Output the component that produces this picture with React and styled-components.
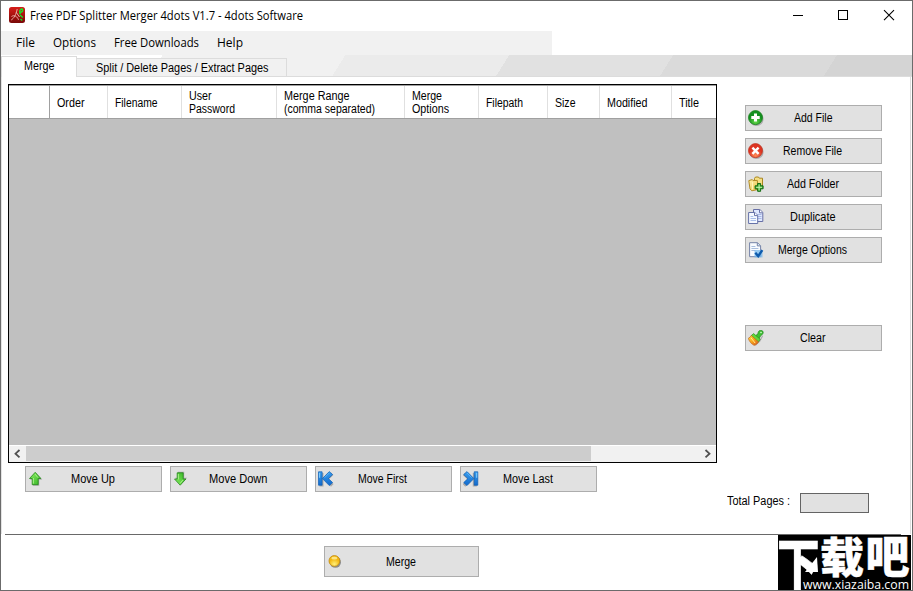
import React, { useLayoutEffect, useRef, useState } from 'react';
import styled, { createGlobalStyle } from 'styled-components';

const GlobalStyle = createGlobalStyle`
  * {
    box-sizing: border-box;
  }

  body {
    margin: 0;
    overflow: hidden;
    background: #fff;
  }
`;

const Window = styled.div`
  position: relative;
  width: 913px;
  height: 591px;
  display: flex;
  flex-direction: column;
  background: #fff;
  color: #000;
  border: 1px solid #6b6b6b;
  font-family: 'Liberation Sans', Arial, sans-serif;
  font-size: 12px;
  overflow: hidden;
`;

const TitleBar = styled.header`
  height: 30px;
  display: flex;
  align-items: center;
  padding: 0 0 2px 8px;
  font-family: 'Open Sans', 'Noto Sans', sans-serif;
  font-size: 12px;

  > svg:first-child {
    margin-right: 5px;
  }
`;

const Controls = styled.div`
  margin-left: auto;
  display: flex;
  width: 137px;
  height: 28px;
`;

const MenuBar = styled.nav`
  width: 551px;
  height: 24px;
  display: flex;
  align-items: center;
  gap: 18px;
  padding: 0 0 2px 15px;
  background: #f1f1f1;
  font-family: 'Open Sans', 'Noto Sans', sans-serif;
  font-size: 12px;
`;

const TabStrip = styled.div`
  height: 22px;
  display: flex;
  align-items: flex-end;
  border-bottom: 1px solid #dcdcdc;
  background: linear-gradient(
    122deg,
    #fff 0 137px,
    #f1f1f1 137px 292px,
    #ebebeb 292px 431px,
    #e1e1e1 431px 570px,
    #dadada 570px 709px,
    #d4d4d4 709px
  );
`;

const Tab = styled.div`
  height: ${props => (props.$active ? '21px' : '18px')};
  width: ${props => (props.$active ? '76px' : '210px')};
  margin-bottom: ${props => (props.$active ? '-1px' : '0')};
  padding: ${props => (props.$active ? '3px 0 0 22px' : '3px 0 0 19px')};
  background: ${props => (props.$active ? '#fff' : '#f1f1f1')};
  border: 1px solid #dcdcdc;
  border-left-width: ${props => (props.$active ? '1px' : '0')};
  border-bottom: 0;
`;

const Page = styled.main`
  height: 457px;
  display: flex;
  padding: 7px 0 0 6px;
  border-left: 1px solid #e3e3e3;
  border-right: 1px solid #dcdcdc;
  margin-right: 1px;
`;

const FilesPane = styled.section`
  width: 709px;
`;

const Grid = styled.div`
  height: 379px;
  display: flex;
  flex-direction: column;
  border: 1px solid #000;
  background: #c0c0c0;
`;

const HeaderRow = styled.div`
  height: 34px;
  display: flex;
  background: #fff;
  border-top: 1px solid #a0a0a0;
  border-bottom: 1px solid #a0a0a0;
`;

const HeaderCell = styled.div`
  width: ${props => props.$width}px;
  flex: none;
  display: flex;
  flex-direction: column;
  justify-content: center;
  padding: ${props => (props.$wrapped ? '1px' : '3px')} 0 0 6.6px;
  border-right: 1px solid ${props => (props.$corner ? '#a0a0a0' : props.$last ? '#fff' : '#e0e0e0')};
`;

const Rows = styled.div`
  flex: 1;
`;

const ScrollBar = styled.div`
  height: 17px;
  display: flex;
  background: #f1f1f1;
  border-top: 1px solid #fff;
`;

const ScrollButton = styled.div`
  width: 17px;
  height: 16px;
`;

const Thumb = styled.div`
  width: 565px;
  height: 15px;
  margin-right: auto;
  background: #cdcdcd;
`;

const MoveRow = styled.div`
  display: flex;
  gap: 8px;
  padding: 3px 0 0 17px;
`;

const SidePane = styled.aside`
  flex: 1;
  display: flex;
  flex-direction: column;
  padding: 21px 0 0 28px;
`;

const SideButtons = styled.div`
  display: flex;
  flex-direction: column;
  gap: 7px;
`;

const ClearSlot = styled.div`
  margin-top: 62px;
`;

const Button = styled.button`
  width: ${props => (props.$large ? '155px' : '137px')};
  height: ${props => (props.$large ? '31px' : '26px')};
  display: flex;
  align-items: center;
  padding: 0 19.4px 0 2px;
  background: #e1e1e1;
  border: 1px solid #adadad;
  color: #000;
  font: inherit;

  > svg {
    flex: none;
  }
`;

const ButtonLabel = styled.span`
  flex: 1;
  display: flex;
  justify-content: center;
  padding-top: ${props => (props.$large ? '2px' : '0')};
`;

const Total = styled.div`
  display: flex;
  align-items: flex-start;
  gap: 10px;
  margin: 142px 0 0 -18px;
`;

const TotalLabel = styled.div`
  padding-top: 2px;
`;

const TotalBox = styled.div`
  width: 69px;
  height: 20px;
  background: #e1e1e1;
  border: 1px solid #646464;
`;

const Footer = styled.footer`
  width: 896px;
  margin-left: 4px;
  padding: 11px 0 0 319px;
  border-top: 1px solid #696969;
`;

const Watermark = styled.svg`
  position: absolute;
  right: 1px;
  bottom: -1px;
`;

const FitBox = styled.span`
  display: block;
  width: ${props => props.$width}px;
  height: 13px;
  line-height: 13px;
  white-space: pre;
`;

const FitInner = styled.span`
  display: inline-block;
  transform-origin: 0 50%;
`;

// Squeezes a label to the width the original bitmap font gives it
const Fit = ({ width, children }) => {
  const ref = useRef(null);
  const [scale, setScale] = useState(1);

  useLayoutEffect(() => {
    const el = ref.current;
    el.style.transform = 'none';
    const natural = el.getBoundingClientRect().width;
    el.style.transform = `scaleX(${width / natural})`;
    setScale(width / natural);
  }, [width, children]);

  return (
    <FitBox $width={width}>
      <FitInner ref={ref} style={{ transform: `scaleX(${scale})` }}>
        {children}
      </FitInner>
    </FitBox>
  );
};

const columns = [
  { width: 58, lines: [['Order', 27.5]] },
  { width: 74, lines: [['Filename', 42.5]] },
  { width: 95, lines: [['User', 22.5], ['Password', 46]] },
  { width: 128, lines: [['Merge Range', 65.5], ['(comma separated)', 91]] },
  { width: 74, lines: [['Merge', 30], ['Options', 37]] },
  { width: 69, lines: [['Filepath', 37]] },
  { width: 52, lines: [['Size', 20.5]] },
  { width: 72, lines: [['Modified', 40.5]] },
  { width: 44, lines: [['Title', 20]], last: true },
];

const Icon = ({ children }) => (
  <svg width="16" height="16" viewBox="0 0 16 16">
    {children}
  </svg>
);

const AddIcon = () => (
  <Icon>
    <circle cx="8.4" cy="8.8" r="7.2" fill="#777" opacity="0.5" />
    <circle cx="7.5" cy="7.6" r="7" fill="url(#green)" stroke="#17801a" strokeWidth="0.8" />
    <path d="M6 3.5h3V6h2.7v3H9v2.6H6V9H3.3V6H6z" fill="#fff" />
  </Icon>
);

const RemoveIcon = () => (
  <Icon>
    <circle cx="8.4" cy="8.8" r="7.2" fill="#777" opacity="0.5" />
    <circle cx="7.5" cy="7.6" r="7" fill="url(#red)" stroke="#c2331f" strokeWidth="0.8" />
    <path d="M4.4 4.6l6.2 6.2M10.6 4.6l-6.2 6.2" stroke="#fff" strokeWidth="2.4" />
  </Icon>
);

const FolderIcon = () => (
  <Icon>
    <path d="M6.5 2.5l1-1.5h3l.8 1.2h3.2v10H6z" fill="#f6df83" stroke="#a88620" />
    <path d="M.8 4.6l3.5-1 .7 1 4.3-.2 1 9-6.5 1.4L2 13z" fill="url(#folder)" stroke="#b28c26" />
    <path d="M4.5 6v7.5" stroke="#fff3b8" />
    <path d="M9.6 7.5h3v2.3h2.5v3h-2.5v2.5h-3v-2.5H7.1v-3h2.5z" fill="#39a92b" stroke="#156c14" />
    <path d="M11.1 8.5v6M8.1 11.3h6" stroke="#caf5b6" />
  </Icon>
);

const DuplicateIcon = () => (
  <Icon>
    <path d="M5.5.5h6.3l3 2.8v9.2H5.5z" fill="#dfe8ff" stroke="#6870a6" />
    <path d="M11.5.8v3h3" fill="#fff" stroke="#6870a6" />
    <path d="M8 5.5h5.5M8 7.5h5.5M8 9.5h5.5" stroke="#a8b8e4" />
    <path d="M.6 3.5h6.2l2.9 2.8v8.2H.6z" fill="#f4f8ff" stroke="#6672a8" />
    <path d="M6.5 3.6v3h3" fill="#fff" stroke="#6672a8" />
    <path d="M2.5 7.5h2.8M2.5 9.5h5.5M2.5 11.5h5.5" stroke="#a9bee9" />
  </Icon>
);

const OptionsIcon = () => (
  <Icon>
    <path d="M1.6.7h8l3 3v11h-11z" fill="#f8fbff" stroke="#7483a7" />
    <path d="M9.3.8v3.1h3.2" fill="#dce9fa" stroke="#7483a7" />
    <path d="M3.4 4.5h4M3.4 6.5h7M3.4 8.5h4" stroke="#a8bddd" />
    <path d="M6.5 8h8v7.4h-8z" fill="#74b8ed" opacity="0.75" />
    <path d="M7.3 10.8l2.9 3.3 4.1-6" fill="none" stroke="#0e5bad" strokeWidth="2.4" />
  </Icon>
);

const ClearIcon = () => (
  <Icon>
    <path d="M5.6 15.2l5.2-4 3.6-6 .6 1-2.6 5-4.4 4.2z" fill="#777" opacity="0.5" />
    <path d="M7.6 5.8l2.4-2.2c0-1.8.9-3.1 2.7-3.3 1.7 0 2.8 1.2 2.4 2.8-.4 1.5-1.6 2-2.6 2.8L10.8 9z" fill="#3fc035" stroke="#23851f" strokeWidth="0.7" />
    <circle cx="13" cy="2.5" r="0.8" fill="#d9ffd0" />
    <path d="M5.6 3.6l6.6 5.6-1.8 2.8-7.4-6.2z" fill="#62d83a" stroke="#2b901f" strokeWidth="0.7" />
    <path d="M3.2 5.4l7.2 6.4c-.8 1.8-2.2 3-4.3 3.5C3.4 14.1 1.3 11.3.3 8.3c1.4-.6 2.3-1.5 2.9-2.9z" fill="url(#brush)" stroke="#c2661a" strokeWidth="0.7" />
    <path d="M3 7.9l4.2 5.2" stroke="#fff08a" />
  </Icon>
);

const ArrowIcon = ({ down }) => (
  <Icon>
    <g transform={down ? 'translate(0 15.5) scale(1 -1)' : undefined}>
      <path d="M8 2.2l6.2 6.5h-3v6H5V8.7H2z" fill="#777" opacity="0.5" />
      <path d="M7.2 1.3l5.7 6.2h-2.7v6.2h-6V7.5H1.5z" fill="url(#arrow)" stroke="#24861c" strokeWidth="0.8" />
      <path d="M7.2 3.2l2.7 3.4M5.4 7v5.6" stroke="#b8f797" strokeWidth="0.8" />
    </g>
  </Icon>
);

const EndIcon = ({ last }) => (
  <Icon>
    <g transform={last ? 'translate(15.3 0) scale(-1 1)' : undefined}>
      <path d="M1.5 2h4v13.5h-4zM13 1.5l2.4 2.6-4.6 4.4 4.8 4.6-2.6 2.6-7-7z" fill="#666" opacity="0.45" />
      <path d="M.5.8h3.6v13.4H.5zM11.3.6l3.3 3-4.2 4 4.2 4-3.3 3-6.9-7z" fill="url(#blue)" stroke="#0f5fb6" strokeWidth="0.7" />
      <path d="M1.6 1.8v5" stroke="#82d0ff" />
      <path d="M11.3 1.9L6.6 6.7" stroke="#6cc3fa" strokeWidth="0.7" />
    </g>
  </Icon>
);

const MergeIcon = () => (
  <Icon>
    <circle cx="8.4" cy="8.2" r="5.6" fill="#555" opacity="0.6" />
    <circle cx="7.4" cy="6.9" r="5.4" fill="url(#gold)" stroke="#c08a14" strokeWidth="0.8" />
    <ellipse cx="7.3" cy="4.2" rx="3" ry="1.4" fill="#fff6b5" opacity="0.7" />
  </Icon>
);

const AppIcon = () => (
  <svg width="16" height="16" viewBox="0 0 16 16">
    <rect width="16" height="16" rx="2.5" fill="url(#app)" />
    <path d="M2.2 13c2.5-1.5 5-5.2 6-11M2.5 9.5c3-2 6 .3 7 3.3M7 5l3.5 5" fill="none" stroke="#e9aaa4" strokeWidth="1" />
    <path d="M13.5 1.8c-2 .5-3.2 1.7-2.7 3.4 2.4.1 3.3-.9 2.7-3.4M10.3 7l1.5-1.3M11 8l2.8 2.5M11.5 12l1.7 1.5" fill="none" stroke="#18e52b" strokeWidth="1.4" />
  </svg>
);

const DefsSvg = styled.svg`
  position: absolute;
`;

const Defs = () => (
  <DefsSvg width="0" height="0">
    <defs>
      <radialGradient id="green" cx="0.5" cy="0.8">
        <stop stopColor="#65d849" />
        <stop offset="1" stopColor="#139020" />
      </radialGradient>
      <radialGradient id="red" cx="0.5" cy="0.85">
        <stop stopColor="#ff8a55" />
        <stop offset="1" stopColor="#dd3322" />
      </radialGradient>
      <radialGradient id="gold" cx="0.5" cy="0.8">
        <stop stopColor="#fff07a" />
        <stop offset="1" stopColor="#f3b710" />
      </radialGradient>
      <linearGradient id="folder" x2="1" y2="1">
        <stop stopColor="#fff2ab" />
        <stop offset="1" stopColor="#e9c24a" />
      </linearGradient>
      <linearGradient id="brush" x2="1" y2="1">
        <stop stopColor="#ffe144" />
        <stop offset="0.5" stopColor="#f7a51c" />
        <stop offset="1" stopColor="#d9531b" />
      </linearGradient>
      <linearGradient id="arrow" x2="1" y2="1">
        <stop stopColor="#8cef63" />
        <stop offset="1" stopColor="#33b324" />
      </linearGradient>
      <linearGradient id="blue" x2="0" y2="1">
        <stop stopColor="#3a9eee" />
        <stop offset="1" stopColor="#1169cc" />
      </linearGradient>
      <linearGradient id="app" x2="0" y2="1">
        <stop stopColor="#d61c18" />
        <stop offset="1" stopColor="#790908" />
      </linearGradient>
    </defs>
  </DefsSvg>
);

const sideButtons = [
  { label: 'Add File', width: 38.5, icon: <AddIcon /> },
  { label: 'Remove File', width: 59, icon: <RemoveIcon /> },
  { label: 'Add Folder', width: 52, icon: <FolderIcon /> },
  { label: 'Duplicate', width: 45.5, icon: <DuplicateIcon /> },
  { label: 'Merge Options', width: 69, icon: <OptionsIcon /> },
];

const moveButtons = [
  { label: 'Move Up', width: 44, icon: <ArrowIcon /> },
  { label: 'Move Down', width: 58.5, icon: <ArrowIcon down /> },
  { label: 'Move First', width: 49, icon: <EndIcon /> },
  { label: 'Move Last', width: 50, icon: <EndIcon last /> },
];

const ActionButton = ({ icon, label, width, large }) => (
  <Button $large={large}>
    {icon}
    <ButtonLabel $large={large}>
      <Fit width={width}>{label}</Fit>
    </ButtonLabel>
  </Button>
);

const App = () => {
  return (
    <Window>
      <GlobalStyle />
      <Defs />
      <TitleBar>
        <AppIcon />
        <Fit width={273}>Free PDF Splitter Merger 4dots V1.7 - 4dots Software</Fit>
        <Controls>
          <svg width="137" height="28" viewBox="0 0 137 28" fill="none" stroke="#000">
            <path d="M18 14.5h10" />
            <rect x="63.5" y="9.5" width="9" height="9" />
            <path d="M109 9.2l10 10M119 9.2l-10 10" strokeWidth="1.1" />
          </svg>
        </Controls>
      </TitleBar>
      <MenuBar>
        <Fit width={19}>File</Fit>
        <Fit width={43}>Options</Fit>
        <Fit width={85}>Free Downloads</Fit>
        <Fit width={26}>Help</Fit>
      </MenuBar>
      <TabStrip>
        <Tab $active>
          <Fit width={30.5}>Merge</Fit>
        </Tab>
        <Tab>
          <Fit width={172.5}>Split / Delete Pages / Extract Pages</Fit>
        </Tab>
      </TabStrip>
      <Page>
        <FilesPane>
          <Grid>
            <HeaderRow>
              <HeaderCell $width={41} $corner />
              {columns.map((column, i) => (
                <HeaderCell
                  key={i}
                  $width={column.width}
                  $wrapped={column.lines.length > 1}
                  $last={column.last}
                >
                  {column.lines.map(([text, width]) => (
                    <Fit key={text} width={width}>{text}</Fit>
                  ))}
                </HeaderCell>
              ))}
            </HeaderRow>
            <Rows />
            <ScrollBar>
              <ScrollButton>
                <svg width="17" height="16" viewBox="0 0 17 16">
                  <path d="M10.5 4l-4 3.7 4 3.7" fill="none" stroke="#505050" strokeWidth="1.8" />
                </svg>
              </ScrollButton>
              <Thumb />
              <ScrollButton>
                <svg width="17" height="16" viewBox="0 0 17 16">
                  <path d="M6.5 4l4 3.7-4 3.7" fill="none" stroke="#505050" strokeWidth="1.8" />
                </svg>
              </ScrollButton>
            </ScrollBar>
          </Grid>
          <MoveRow>
            {moveButtons.map(button => (
              <ActionButton key={button.label} {...button} />
            ))}
          </MoveRow>
        </FilesPane>
        <SidePane>
          <SideButtons>
            {sideButtons.map(button => (
              <ActionButton key={button.label} {...button} />
            ))}
          </SideButtons>
          <ClearSlot>
            <ActionButton icon={<ClearIcon />} label="Clear" width={25.5} />
          </ClearSlot>
          <Total>
            <TotalLabel>
              <Fit width={63}>Total Pages :</Fit>
            </TotalLabel>
            <TotalBox />
          </Total>
        </SidePane>
      </Page>
      <Footer>
        <ActionButton icon={<MergeIcon />} label="Merge" width={30} large />
      </Footer>
      <Watermark width="133" height="56" viewBox="0 0 133 56">
        <rect width="133" height="56" fill="#000" />
        <g fill="#fff" stroke="#fff" fontFamily="'Noto Sans CJK SC', sans-serif" fontWeight="900" fontSize="44">
          <text transform="translate(-1 49) scale(0.97 1.25)" strokeWidth="0.3">下</text>
          <text transform="translate(42 38.3) scale(1 0.96)" strokeWidth="0.4">载</text>
          <text transform="translate(87.5 38.3) scale(1 1.02)" strokeWidth="0.4">吧</text>
        </g>
        <path d="M39 22l1 15H27z" fill="#fff" />
        <text
          x="25"
          y="54"
          fill="#fff"
          fontFamily="'Open Sans', sans-serif"
          fontSize="12"
          textLength="106"
          lengthAdjust="spacingAndGlyphs"
        >
          www.xiazaiba.com
        </text>
      </Watermark>
    </Window>
  );
};

export default App;
